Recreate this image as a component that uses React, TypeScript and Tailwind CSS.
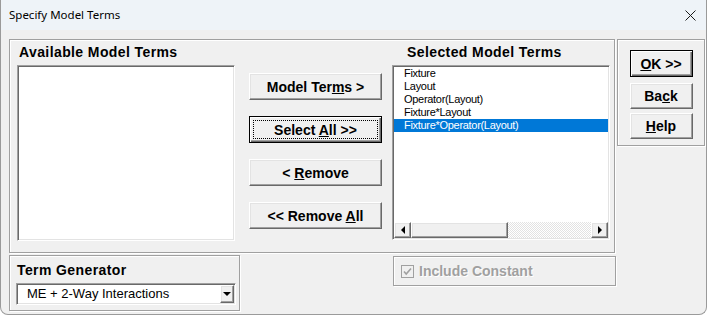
import React from "react";

const raised =
  "border border-t-white border-l-white border-r-[#696969] border-b-[#696969] shadow-[inset_-1px_-1px_0_#a0a0a0,inset_1px_1px_0_#e3e3e3] bg-[#f0f0f0]";
const raisedDefault =
  "border border-black shadow-[inset_1px_1px_0_#ffffff,inset_-1px_-1px_0_#696969,inset_-2px_-2px_0_#a0a0a0] bg-[#f0f0f0]";
const sunken =
  "border border-t-[#a0a0a0] border-l-[#a0a0a0] border-r-white border-b-white shadow-[inset_1px_1px_0_#696969,inset_-1px_-1px_0_#e3e3e3] bg-white";
const etched = "border border-[#a0a0a0] shadow-[inset_1px_1px_0_#ffffff,1px_1px_0_#ffffff]";
const label = "font-['Liberation_Sans',Arial,sans-serif] font-bold text-[14px] tracking-[0.4px] text-black";

function Button({
  children,
  isDefault = false,
  focused = false,
  className = "",
}: {
  children: React.ReactNode;
  isDefault?: boolean;
  focused?: boolean;
  className?: string;
}) {
  return (
    <div
      className={`relative flex items-center justify-center font-['Liberation_Sans',Arial,sans-serif] font-bold text-[14px] text-black ${
        isDefault ? raisedDefault : raised
      } ${className}`}
    >
      {focused && <span className="absolute inset-[3px] border border-dotted border-black" />}
      <span className="relative leading-none">{children}</span>
    </div>
  );
}

function Arrow({ dir }: { dir: "left" | "right" | "down" }) {
  const pts = dir === "left" ? "4,0 4,8 0,4" : dir === "right" ? "0,0 0,8 4,4" : "0,0 8,0 4,4";
  const w = dir === "down" ? 8 : 4;
  const h = dir === "down" ? 4 : 8;
  return (
    <svg width={w} height={h} viewBox={`0 0 ${w} ${h}`}>
      <polygon points={pts} fill="#000" />
    </svg>
  );
}

const selected = ["Fixture", "Layout", "Operator(Layout)", "Fixture*Layout", "Fixture*Operator(Layout)"];

export default function App() {
  return (
    <div className="w-[707px] h-[315px] bg-[#f0f0f0] border-x border-b border-[#9a9a9a] rounded-b-[8px] overflow-hidden flex flex-col">
      {/* Title bar */}
      <div className="h-[30px] shrink-0 bg-[#eef3f8] flex items-center justify-between pl-[8px] pr-[10px]">
        <span className="font-['Noto_Sans',sans-serif] text-[11.5px] text-black">Specify Model Terms</span>
        <svg width="11" height="11" viewBox="0 0 11 11">
          <path d="M0.5 0.5 L10.5 10.5 M10.5 0.5 L0.5 10.5" stroke="#1a1a1a" strokeWidth="1" />
        </svg>
      </div>

      {/* Body */}
      <div className="flex flex-col pl-[8px] pt-[9px]">
        <div className="flex items-start gap-[2px]">
          {/* Main frame */}
          <div className={`w-[606px] h-[214px] flex ${etched}`}>
            <div className="ml-[7px] flex flex-col">
              <div className={`h-[25px] flex items-center pl-[2px] ${label}`}>Available Model Terms</div>
              <div className={`w-[218px] h-[176px] ${sunken}`} />
            </div>

            <div className="ml-[14px] pt-[33px] flex flex-col gap-[16px]">
              <Button className="w-[133px] h-[27px]">
                Model Ter<u>m</u>s &gt;
              </Button>
              <Button className="w-[133px] h-[27px]" isDefault focused>
                Select <u>A</u>ll &gt;&gt;
              </Button>
              <Button className="w-[133px] h-[27px]">
                &lt; <u>R</u>emove
              </Button>
              <Button className="w-[133px] h-[27px]">
                &lt;&lt; Remove <u>A</u>ll
              </Button>
            </div>

            <div className="ml-[10px] flex flex-col">
              <div className={`h-[25px] flex items-center pl-[15px] ${label}`}>Selected Model Terms</div>
              <div className={`w-[218px] h-[175px] flex flex-col ${sunken}`}>
                <div className="flex-1 pt-[1px] px-[1px] font-['Liberation_Sans',Arial,sans-serif] text-[11px] tracking-[-0.3px] leading-[13px]">
                  {selected.map((t, i) => (
                    <div
                      key={t}
                      className={`h-[13px] pl-[10px] ${
                        i === selected.length - 1 ? "bg-[#0078d7] text-white" : "text-black"
                      }`}
                    >
                      {t}
                    </div>
                  ))}
                </div>
                <div className="h-[16px] mx-[1px] mb-[1px] flex">
                  <div className={`w-[17px] flex items-center justify-center ${raised}`}>
                    <Arrow dir="left" />
                  </div>
                  <div className={`w-[97px] ${raised}`} />
                  <div className="flex-1 bg-[repeating-conic-gradient(#ffffff_0_25%,#e2e2e2_0_50%)] bg-[length:2px_2px]" />
                  <div className={`w-[17px] flex items-center justify-center ${raised}`}>
                    <Arrow dir="right" />
                  </div>
                </div>
              </div>
            </div>
          </div>

          {/* OK frame */}
          <div className={`w-[88px] h-[107px] flex flex-col items-center pt-[10px] gap-[7px] ${etched}`}>
            <Button className="w-[63px] h-[27px]" isDefault>
              <u>O</u>K &gt;&gt;
            </Button>
            <Button className="w-[63px] h-[26px] -mt-[1px]">
              Ba<u>c</u>k
            </Button>
            <Button className="w-[63px] h-[26px] -mt-[3px]">
              <u>H</u>elp
            </Button>
          </div>
        </div>

        <div className="flex items-start mt-[2px]">
          {/* Term generator */}
          <div className={`w-[231px] h-[56px] flex flex-col ${etched}`}>
            <div className={`h-[27px] flex items-center pl-[7px] pt-[1px] ${label}`}>Term Generator</div>
            <div className={`ml-[6px] w-[220px] h-[22px] flex items-center ${sunken}`}>
              <span className="flex-1 pl-[10px] font-['Liberation_Sans',Arial,sans-serif] text-[13px] text-black">
                ME + 2-Way Interactions
              </span>
              <div className={`w-[14px] h-[18px] mr-[1px] flex items-center justify-center ${raised}`}>
                <Arrow dir="down" />
              </div>
            </div>
          </div>

          {/* Include constant */}
          <div className={`ml-[153px] mt-[1px] w-[223px] h-[30px] flex items-center pl-[7px] gap-[5px] ${etched}`}>
            <svg width="13" height="13" viewBox="0 0 13 13">
              <rect x="0.5" y="0.5" width="12" height="12" fill="#f0f0f0" stroke="#a0a0a0" />
              <path d="M3 6.5 L5.2 9 L10 3.5" fill="none" stroke="#a0a0a0" strokeWidth="1.6" />
            </svg>
            <span className="font-['Liberation_Sans',Arial,sans-serif] font-bold text-[14px] text-[#a0a0a0] [text-shadow:1px_1px_0_#ffffff]">
              Include Constant
            </span>
          </div>
        </div>
      </div>
    </div>
  );
}
